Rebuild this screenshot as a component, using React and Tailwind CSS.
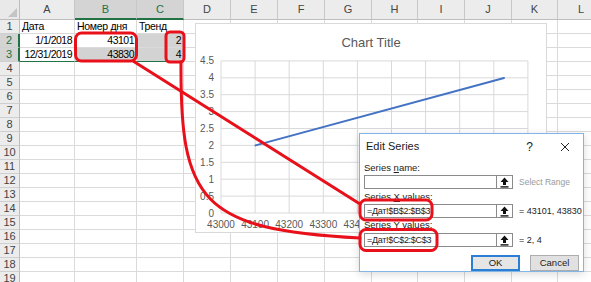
const cols = ['A', 'B', 'C', 'D', 'E', 'F', 'G', 'H', 'I', 'J', 'K', 'L'];

const cells = {
  '1A': { v: 'Дата' },
  '1B': { v: 'Номер дня' },
  '1C': { v: 'Тренд' },
  '2A': { v: '1/1/2018', right: true },
  '2B': { v: '43101', right: true },
  '2C': { v: '2', right: true, sel: true },
  '3A': { v: '12/31/2019', right: true },
  '3B': { v: '43830', right: true, sel: true },
  '3C': { v: '4', right: true, sel: true },
};

const rows = Array.from({ length: 19 }, (_, i) => i + 1);

function Sheet() {
  return (
    <div className="grid grid-cols-[20px_55px_62px_47px_47px_47px_47px_47px_46px_47px_47px_46px_47px] grid-rows-[20px_repeat(19,14px)] font-['Liberation_Sans',sans-serif] text-black">
      <div className="bg-[#e9e9e9] border-r border-b border-[#bdbdbd] flex items-end justify-end p-[2px]">
        <svg width="9" height="9" viewBox="0 0 9 9">
          <path d="M9 0 L9 9 L0 9 Z" fill="#c4c4c4" />
        </svg>
      </div>
      {cols.map((c) => {
        const hi = c === 'B' || c === 'C';
        return (
          <div
            key={c}
            className={`flex items-center justify-center text-[11px] border-r border-[#c8c8c8] ${
              hi ? 'bg-[#d4d4d4] text-[#217346] border-b-2 border-b-[#217346]' : 'bg-[#ececec] text-[#444] border-b border-b-[#bdbdbd]'
            }`}
          >
            {c}
          </div>
        );
      })}
      {rows.map((r) => (
        <Row key={r} r={r} />
      ))}
    </div>
  );
}

function Row({ r }) {
  const hi = r === 2 || r === 3;
  return (
    <>
      <div
        className={`flex items-center justify-center text-[11px] border-b border-[#cfcfcf] ${
          hi ? 'bg-[#d4d4d4] text-[#217346] border-r-2 border-r-[#217346]' : 'bg-[#ececec] text-[#444] border-r border-r-[#bdbdbd]'
        }`}
      >
        {r}
      </div>
      {cols.map((c) => {
        const cell = cells[`${r}${c}`];
        const inRange = hi && (c === 'A' || c === 'B' || c === 'C');
        return (
          <div
            key={c}
            className={`flex items-center px-[2px] text-[10.5px] leading-none whitespace-nowrap overflow-visible border-r border-b ${
              cell?.right ? 'justify-end tracking-[-0.5px]' : 'justify-start tracking-[-0.3px]'
            } ${cell?.sel ? 'bg-[#d3d3d3]' : 'bg-white'} ${
              r === 3 && inRange ? 'border-b-[#217346]' : 'border-b-[#dadada]'
            } ${c === 'C' && hi ? 'border-r-[#217346]' : 'border-r-[#dadada]'}`}
          >
            {cell?.v}
          </div>
        );
      })}
    </>
  );
}

const gx = (i) => 25 + i * 34.1;
const gy = (k) => 189 - k * 16.9;

function Chart() {
  const yLabels = ['0', '0.5', '1', '1.5', '2', '2.5', '3', '3.5', '4', '4.5'];
  return (
    <div className="absolute left-[195px] top-[23px] w-[352px] h-[210px] bg-white border border-[#d9d9d9]">
      <div className="absolute left-0 right-0 top-[9px] text-center text-[13px] text-[#595959] font-['Liberation_Sans',sans-serif]">
        Chart Title
      </div>
      <svg width="352" height="210" className="absolute left-0 top-0">
        {Array.from({ length: 10 }, (_, i) => (
          <line key={`v${i}`} x1={gx(i)} x2={gx(i)} y1={gy(9)} y2={gy(0)} stroke="#d9d9d9" strokeWidth="1" />
        ))}
        {Array.from({ length: 10 }, (_, k) => (
          <line key={`h${k}`} x1={gx(0)} x2={gx(9)} y1={gy(k)} y2={gy(k)} stroke="#d9d9d9" strokeWidth="1" />
        ))}
        {yLabels.map((t, k) => (
          <text key={t} x="18" y={gy(k) + 3.5} textAnchor="end" fontSize="10" fill="#595959" fontFamily="Liberation Sans, sans-serif">
            {t}
          </text>
        ))}
        {Array.from({ length: 10 }, (_, i) => (
          <text key={`x${i}`} x={gx(i)} y="204" textAnchor="middle" fontSize="10" fill="#595959" fontFamily="Liberation Sans, sans-serif">
            {43000 + i * 100}
          </text>
        ))}
        <line x1="59.5" y1="121.4" x2="308" y2="54" stroke="#4472c4" strokeWidth="2" strokeLinecap="round" />
      </svg>
    </div>
  );
}

function PickIcon() {
  return (
    <svg width="9" height="11" viewBox="0 0 9 11">
      <path d="M4.5 0.5 L8.5 5 H6 V8 H3 V5 H0.5 Z" fill="#111" />
      <rect x="0.5" y="9.2" width="8" height="1.4" fill="#111" />
    </svg>
  );
}

function RefField({ value, result }) {
  const muted = result === 'Select Range';
  return (
    <div className="flex items-center h-[14px]">
      <div className="w-[133px] h-full border border-[#8a8a8a] bg-white flex items-center px-[2px] text-[9px] tracking-[-0.3px] text-[#222] leading-none whitespace-nowrap">
        {value}
      </div>
      <div className="w-[16px] h-full border border-l-0 border-[#8a8a8a] bg-white flex items-center justify-center">
        <PickIcon />
      </div>
      <div className={`ml-[6px] leading-none whitespace-nowrap ${muted ? 'text-[8.5px] text-[#9a9a9a]' : 'text-[9px] text-[#222]'}`}>
        {result}
      </div>
    </div>
  );
}

function Dialog() {
  return (
    <div className="absolute left-[359px] top-[133px] w-[225px] h-[139px] bg-white border border-[#83b4e6] font-['Liberation_Sans',sans-serif] shadow-[0_2px_8px_rgba(0,0,0,0.15)]">
      <div className="flex items-center h-[25px] pl-[6px] pr-[13px] text-[11px] text-[#1a1a1a]">
        <span>Edit Series</span>
        <span className="ml-auto mr-[27px] text-[12px]">?</span>
        <svg width="10" height="10" viewBox="0 0 10 10">
          <path d="M1 1 L9 9 M9 1 L1 9" stroke="#222" strokeWidth="1" />
        </svg>
      </div>
      <div className="pl-[4px] text-[9.5px] text-[#222] leading-none">
        <div className="mt-[4px] h-[10px] mb-[2px]">
          Series <span className="underline">n</span>ame:
        </div>
        <RefField value="" result="Select Range" />
        <div className="mt-[3px] h-[10px] mb-[2px]">
          Series <span className="underline">X</span> values:
        </div>
        <RefField value="=Дат!$B$2:$B$3" result="= 43101, 43830" />
        <div className="mt-[2px] h-[10px] mb-[3px]">
          Series <span className="underline">Y</span> values:
        </div>
        <RefField value="=Дат!$C$2:$C$3" result="= 2, 4" />
        <div className="flex mt-[8px] pl-[107px] gap-[10px]">
          <div className="w-[49px] h-[16px] flex items-center justify-center bg-[#e5e5e5] border-2 border-[#2a7fd4] text-[9.5px]">
            OK
          </div>
          <div className="w-[49px] h-[16px] flex items-center justify-center bg-[#e1e1e1] border border-[#adadad] text-[9.5px]">
            Cancel
          </div>
        </div>
      </div>
    </div>
  );
}

function Marks() {
  return (
    <svg width="591" height="282" className="absolute left-0 top-0 pointer-events-none">
      <g fill="none" stroke="#e8101a" strokeWidth="3" strokeLinecap="round">
        <rect x="75.5" y="33" width="61" height="28" rx="6" />
        <rect x="166" y="32" width="18" height="30" rx="4" />
        <rect x="360" y="200" width="72" height="20" rx="6" />
        <rect x="360" y="229.5" width="77" height="21" rx="6" />
        <path d="M133 61 L360 204" />
        <path d="M181 62 C180 200 200 230 360 238" />
      </g>
    </svg>
  );
}

export default function App() {
  return (
    <div className="relative w-[591px] h-[282px] overflow-hidden bg-white">
      <Sheet />
      <Chart />
      <Dialog />
      <Marks />
    </div>
  );
}
